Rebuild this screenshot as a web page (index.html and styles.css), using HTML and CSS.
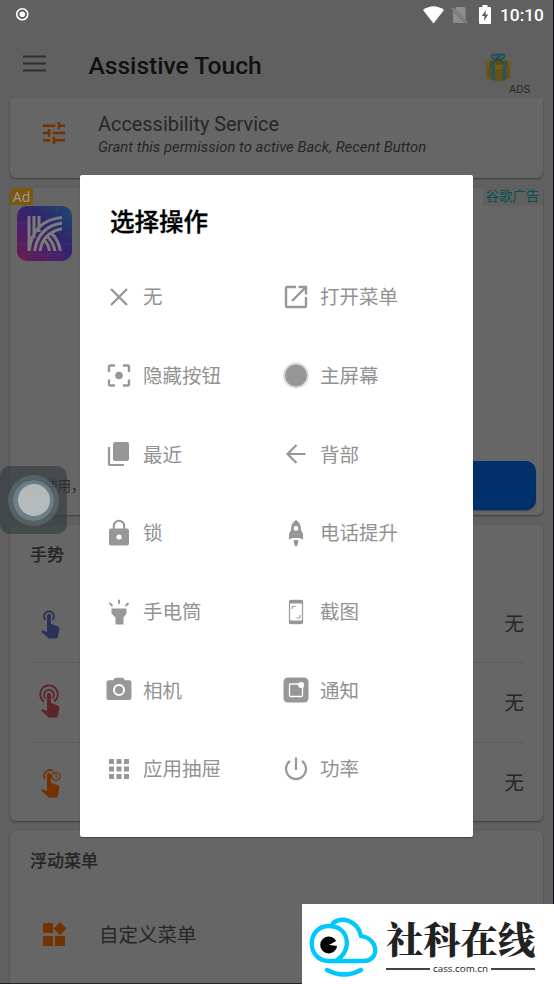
FILE: index.html
```html
<!DOCTYPE html>
<html lang="zh-CN">
<head>
<meta charset="utf-8">
<title>Assistive Touch</title>
<link rel="stylesheet" href="styles.css">
</head>
<body>
<div class="screen">
  <div class="statusbar">
    <svg class="record" viewBox="0 0 12 12"><circle cx="6" cy="6" r="5.3" fill="none" stroke="#fff" stroke-width="1.500"/><circle cx="6" cy="6" r="2.700" fill="#fff"/></svg>
    <div class="status-icons">
      <svg width="21" height="18" viewBox="0 0 21 18"><path d="M0 4Q10.500-3.500 21 4L10.500 17.500Z" fill="#fff"/></svg>
      <svg width="17" height="18" viewBox="0 0 17 18"><path d="M5.500 1H13q1.500 0 1.500 1.500V14L4 3ZM2 5l12 12H3.500Q2 17 2 15.500Z" fill="#8d8d8d"/><path d="M1 2l15 15" stroke="#929292" stroke-width="1.300"/></svg>
      <svg width="12" height="19" viewBox="0 0 12 19"><path d="M3.500 0h5v2H11q1 0 1 1v15q0 1-1 1H1q-1 0-1-1V3q0-1 1-1h2.500Z" fill="#fff"/><path d="M7 5L2.700 11H5.500L5 16 9.300 9.500H6.500Z" fill="#606060"/></svg>
      <span class="clock">10:10</span>
    </div>
  </div>
  <header class="appbar">
    <svg class="burger" viewBox="0 0 23 17"><path d="M0 1.500h23M0 8.500h23M0 15.500h23" stroke="#303030" stroke-width="2"/></svg>
    <h1>Assistive Touch</h1>
    <div class="ads">
      <svg width="27" height="29" viewBox="0 0 27 29"><path d="M1.500 11L13 16l12-5v14.500L13 28.500l-11.500-3Z" fill="#695211"/><path d="M.5 8.500L13 5l13.500 3.500v5L13 17 .5 13.500Z" fill="#725b15"/><path d="M5 7.500l5 1.500v18.500l-3.500-1V15L4 13ZM18 9l4-1.500 1 5.500-2 2v12l-3.500 1Z" fill="#28545e"/><path d="M7 8h13l-2 4H9Z" fill="#634b13"/><path d="M13 7C9 7 5 4 7 2s5 1 6 5c1-4 4-7 6-5s-2 5-6 5ZM13 6C10 2 11 1 13 1s3 1 0 5M12 7l-5 3M14 7l5 3" fill="none" stroke="#204c57" stroke-width="1.700"/></svg>
      <span>ADS</span>
    </div>
  </header>
  <main>
    <section class="card service">
      <svg class="icon-tune" viewBox="3 3 18 18"><path fill="#753100" d="M3 17v2h6v-2H3zM3 5v2h10V5H3zm10 16v-2h8v-2h-8v-2h-2v6h2zM7 9v2H3v2h4v2h2V9H7zm14 4v-2H11v2h10zm-6-4h2V7h4V5h-4V3h-2v6z"/></svg>
      <div><div class="service-title">Accessibility Service</div><div class="service-note">Grant this permission to active Back, Recent Button</div></div>
    </section>
    <section class="card advert">
      <div class="ad-head"><span class="ad-badge">Ad</span><span class="ad-source">谷歌广告</span></div>
      <svg class="ad-logo" viewBox="0 0 55 55">
        <defs><linearGradient id="lg" x1="0" y1="1" x2="1" y2="0"><stop offset="0" stop-color="#6d1c48"/><stop offset=".3" stop-color="#501f67"/><stop offset=".6" stop-color="#30266f"/><stop offset="1" stop-color="#1c4c6c"/></linearGradient><clipPath id="kc"><path d="M10 10h35v35H10z"/></clipPath></defs>
        <rect width="55" height="55" rx="10" fill="url(#lg)"/>
        <path d="M0 17h10M0 38h10M45 7h10M45 38h10M13 0v7M40 0v5M30 48v7M5 48h45" stroke="#60477c" stroke-width=".6" opacity=".5"/>
        <g clip-path="url(#kc)" fill="none" stroke="#7b7b7b" stroke-width="3"><path d="M12 10v35M17 10v22M22 10v16M12 46Q15 14 46 11.500M17.500 46Q21 20 46 17M23 46Q25 26 46 22.500M34 27q8 7 9.500 19M30 30q7 7 8 16M27 34q5 5 5.500 12"/></g>
      </svg>
      <div class="ad-bottom"><span>短期使用，</span><div class="ad-button"></div></div>
    </section>
    <section class="card gestures">
      <h2>手势</h2>
      <div class="gesture"><svg class="tap" viewBox="0 0 28 36"><path d="M8.600 15A5 5 0 1 1 15.400 15" fill="none" stroke="#293059" stroke-width="1.700"/><path d="M10 11q0-2 2-2t2 2v8l7 2.500q1.500.7 1.300 2.500L21 31.500q-.3 2-2.500 2H12L4 26.500l1.500-1.200L10 27Z" fill="#293059"/></svg><span>无</span></div>
      <div class="gesture"><svg class="tap" viewBox="0 0 28 36"><path d="M7 17.500A8.800 8.800 0 1 1 17 17.500M8.600 14.500A5 5 0 1 1 15.400 14.500" fill="none" stroke="#5c2527" stroke-width="1.700"/><path d="M10 11q0-2 2-2t2 2v8l7 2.500q1.500.7 1.300 2.500L21 31.500q-.3 2-2.500 2H12L4 26.500l1.500-1.200L10 27Z" fill="#5c2527"/></svg><span>无</span></div>
      <div class="gesture"><svg class="tap" viewBox="0 0 28 36"><path d="M8 15A5.800 5.800 0 0 1 16 7" fill="none" stroke="#753100" stroke-width="1.700"/><circle cx="19" cy="12.500" r="4" fill="none" stroke="#753100" stroke-width="1.300"/><path d="M19 10v3l2 1" fill="none" stroke="#753100"/><path d="M10 11q0-2 2-2t2 2v8l7 2.500q1.500.7 1.300 2.500L21 31.500q-.3 2-2.500 2H12L4 26.500l1.500-1.200L10 27Z" fill="#753100"/></svg><span>无</span></div>
    </section>
    <section class="card floating">
      <h2>浮动菜单</h2>
      <div class="custom"><svg width="24" height="24" viewBox="0 0 24 24"><path fill="#753100" d="M0 1h10v10H0zM0 14h10v10H0zM12 14h10v10H12zM17 0l6.500 6.500L17 13l-6.500-6.500z"/></svg><span>自定义菜单</span></div>
    </section>
  </main>

  <div class="assist"><div class="assist-ring"><div class="assist-core"></div></div></div>

  <div class="dialog" role="dialog">
    <h3>选择操作</h3>
    <div class="actions">
      <div class="action"><svg viewBox="0 0 26 26"><path d="M5 5l16 16M21 5L5 21" fill="none" stroke="#979797" stroke-width="2.400"/></svg><span>无</span></div>
      <div class="action"><svg viewBox="0 0 26 26"><path d="M13 3H4.500Q3 3 3 4.500v17Q3 23 4.500 23h17q1.500 0 1.500-1.500V13M15.500 3H23v7.500M23 3L9 17" fill="none" stroke="#979797" stroke-width="2.400"/></svg><span>打开菜单</span></div>
      <div class="action"><svg viewBox="0 0 26 26"><circle cx="13" cy="12.500" r="3.800" fill="#979797"/><path d="M3 9V4Q3 2.500 4.500 2.500H9M17 2.500h4.500Q23 2.500 23 4V9M23 16.500V21q0 1.500-1.500 1.500H17M9 22.500H4.500Q3 22.500 3 21v-4.500" fill="none" stroke="#979797" stroke-width="2.400"/></svg><span>隐藏按钮</span></div>
      <div class="action"><svg viewBox="0 0 26 26"><circle cx="13" cy="12.500" r="12.300" fill="#e6e6e6" stroke="#d8d8d8" stroke-width="1.200"/><circle cx="13" cy="12.500" r="11" fill="#979797"/></svg><span>主屏幕</span></div>
      <div class="action"><svg viewBox="0 0 26 26"><rect x="7" y="1" width="16" height="19" rx="2" fill="#979797"/><path d="M3 6v16.500Q3 24 4.500 24H18" fill="none" stroke="#979797" stroke-width="2.200"/></svg><span>最近</span></div>
      <div class="action"><svg viewBox="0 0 26 26"><path d="M22.500 13H5M13.500 4L4.500 13l9 9" fill="none" stroke="#979797" stroke-width="2.200"/></svg><span>背部</span></div>
      <div class="action"><svg viewBox="0 0 26 26"><path d="M7.800 10V6a5.200 5.200 0 0 1 10.400 0v4" fill="none" stroke="#979797" stroke-width="2.100"/><rect x="3" y="8.500" width="20" height="17" rx="2" fill="#979797"/><circle cx="13" cy="17" r="2.600" fill="#fff"/></svg><span>锁</span></div>
      <div class="action"><svg viewBox="0 0 26 26"><path fill="#979797" fill-rule="evenodd" d="M13 0c3.500 2.200 5.300 5.500 5 10l2 3.500v6l-3.500-1.500h-7L6 19.500v-6L8 10C7.700 5.500 9.500 2.200 13 0Zm0 6a2.400 2.400 0 1 0 0 4.800A2.400 2.400 0 0 0 13 6Z"/><path d="M10.500 20.500l2.500-.8 2.500.8L14.500 25 13 27l-1.500-2Z" fill="#979797"/></svg><span>电话提升</span></div>
      <div class="action"><svg viewBox="0 0 26 26"><path d="M5.500 9.500h15v5l-3 4V25.500h-8v-7l-4-4Z" fill="#979797"/><path d="M13 .7v4M3.500 4L6.500 7M22.500 4l-3 3" stroke="#979797" stroke-width="2"/></svg><span>手电筒</span></div>
      <div class="action"><svg viewBox="0 0 26 26"><rect x="6.500" y="1.500" width="13" height="23" rx="1.500" fill="#fff" stroke="#a2a2a2" stroke-width="1.300"/><path d="M6 4.500V2.500q0-1.500 1.500-1.500h11Q20 1 20 2.500v2ZM6 21.500v2Q6 25 7.500 25h11q1.500 0 1.500-1.500v-2Z" fill="#979797"/><path d="M9 10V7.500h3.500M17 16v3h-3.500" fill="none" stroke="#979797"/></svg><span>截图</span></div>
      <div class="action"><svg viewBox="0 0 26 26"><path fill="#979797" fill-rule="evenodd" d="M9 .8h8l2 2.400h4.300Q25.500 3.200 25.500 5.500v15q0 2.500-2.500 2.500H3Q.5 23 .5 20.500v-15Q.5 3.200 3 3.200h4ZM13 7a6 6 0 1 0 0 12A6 6 0 0 0 13 7Z"/><circle cx="13" cy="13" r="4" fill="#979797"/></svg><span>相机</span></div>
      <div class="action"><svg viewBox="0 0 26 26"><rect x=".5" y=".5" width="25" height="25" rx="4.500" fill="#979797"/><rect x="6.500" y="7" width="13" height="12.500" rx="1" fill="none" stroke="#fff" stroke-width="1.300"/><circle cx="18.200" cy="8" r="3" fill="#fff"/></svg><span>通知</span></div>
      <div class="action"><svg viewBox="0 0 26 26"><path d="M3 3h5v5H3zM10.500 3h5v5h-5zM18 3h5v5h-5zM3 10.500h5v5H3zM10.500 10.500h5v5h-5zM18 10.500h5v5h-5zM3 18h5v5H3zM10.500 18h5v5h-5zM18 18h5v5h-5z" fill="#979797"/></svg><span>应用抽屉</span></div>
      <div class="action"><svg viewBox="0 0 26 26"><path d="M13 1.500v12.500M7 5a10 10 0 1 0 12 0" fill="none" stroke="#979797" stroke-width="2.200"/></svg><span>功率</span></div>
    </div>
  </div>

</div>
<div class="brand">
  <svg width="70" height="60" viewBox="0 0 70 60"><g fill="none" stroke="#00c8ff" stroke-width="4.300" stroke-linecap="round"><path d="M24 5C32-1 48 1 52 18C71 21 70 43 55 43H20C-3 43-3 8 20 8C41 8 43 33 28.500 41.500"/><path d="M18 52q17 9 34 0"/></g><circle cx="19.700" cy="27" r="8.500" fill="#000"/><path d="M20 27l9-5v6Z" fill="#fff"/></svg>
  <div class="brand-text"><div class="brand-name">社科在线</div><div class="brand-site"><i></i><span>cass.com.cn</span><i></i></div></div>
</div>
</body>
</html>
```
FILE: styles.css
```css
* { box-sizing: border-box; margin: 0; padding: 0; }
body { position: relative; width: 554px; height: 984px; overflow: hidden; background: #606060; color: #262626; font-family: Roboto, "Noto Sans CJK SC", sans-serif; }
svg { display: block; flex: none; overflow: visible; }
.screen { position: relative; height: 984px; overflow: hidden; border-right: 1px solid #0c0c20; border-bottom: 1px solid #252030; }
.statusbar { height: 31px; padding: 0 11px 0 16px; display: flex; align-items: center; justify-content: space-between; }
.record { width: 12.5px; height: 12.5px; margin-top: -2px; }
.status-icons { display: flex; align-items: center; margin-top: -2px; }
.status-icons svg:nth-child(2) { margin-left: 7px; }
.status-icons svg:nth-child(3) { margin-left: 11px; }
.clock { margin-left: 9px; color: #fff; font-size: 17.3px; font-weight: 500; line-height: 30px; width: 42px; white-space: nowrap; }
.appbar { height: 67px; display: flex; padding: 0 20px 0 23px; align-items: center; }
.burger { width: 23px; height: 17px; margin-top: -2px; }
h1 { margin: 2px 0 0 42.5px; font-size: 24.6px; font-weight: 500; line-height: 34px; color: #101010; white-space: nowrap; }
.ads { margin: 21px 3px 0 auto; width: 45px; display: flex; flex-direction: column; }
.ads span { align-self: flex-end; font-size: 11px; line-height: 16px; }
.card { margin: 0 10px; background: #666; border-radius: 6px; box-shadow: 0 1px 2px rgba(0,0,0,.38); }
.service { height: 80px; display: flex; padding: 13px 0 0 33px; border-radius: 0 0 6px 6px; clip-path: inset(0 -4px -4px); }
.icon-tune { width: 22px; height: 22px; margin: 11px 33px 0 0; }
.service-title { font-size: 19.9px; line-height: 27px; white-space: nowrap; }
.service-note { font-size: 14.9px; font-style: italic; line-height: 19px; white-space: nowrap; }
.advert { height: 327px; margin-top: 10px; display: flex; flex-direction: column; overflow: hidden; }
.ad-head { display: flex; justify-content: space-between; height: 18px; }
.ad-badge { width: 23px; height: 17px; background: #7b580d; color: #999; font: 14px/17px "Noto Sans", sans-serif; text-align: center; }
.ad-source { padding: 0 4px 0 3px; background: #606060; color: #074d57; font-size: 13.3px; line-height: 17px; white-space: nowrap; }
.ad-logo { width: 55px; height: 55px; margin-left: 7px; }
.ad-bottom { margin-top: auto; height: 54px; padding: 0 7px; display: flex; justify-content: space-between; font-size: 13.5px; line-height: 51px; }
.ad-button { width: 200px; height: 49px; border-radius: 10px; background: #00306a; box-shadow: 0 1px 1px #404a55; }
.gestures { height: 296px; margin-top: 10px; padding: 16px 19px 0 20px; }
h2 { font-size: 17px; font-weight: 500; line-height: 28px; -webkit-text-stroke: .2px #262626; }
.gestures h2 { margin-bottom: 15px; }
.gesture { height: 79.3px; display: flex; justify-content: space-between; align-items: center; border-bottom: 1px solid #5b5b5b; font-size: 19.5px; }
.gesture:last-child { border: 0; }
.gesture span { margin-top: -1px; }
.tap { width: 28px; height: 36px; margin-left: 7px; }
.floating { height: 160px; margin-top: 10px; padding: 16px 20px 0; }
.custom { display: flex; align-items: center; margin-top: 16px; padding-left: 13px; height: 86px; font-size: 19.5px; }
.custom span { margin: -2px 0 0 32px; }
.assist { position: absolute; left: 0; top: 466px; width: 67px; height: 68px; border-radius: 10px; background: rgba(48,57,60,.62); display: flex; align-items: center; justify-content: center; }
.assist-ring { width: 51px; height: 51px; border-radius: 50%; border: 5px solid rgba(96,110,118,.65); background: rgba(122,145,156,.75); background-clip: padding-box; display: flex; align-items: center; justify-content: center; }
.assist-core { width: 32px; height: 32px; border-radius: 50%; background: rgba(201,203,200,.78); }
.dialog { position: absolute; left: 80px; top: 175px; width: 393px; height: 662px; background: #fff; border-radius: 2px; box-shadow: 0 1px 1px rgba(0,0,0,.35); padding: 30px 26px 0; }
h3 { margin-left: 4px; font-size: 24.5px; line-height: 36px; font-weight: 500; color: #000; -webkit-text-stroke: .35px #000; }
.actions { margin-top: 16.5px; display: grid; grid-template-columns: 177px 1fr; grid-auto-rows: 78.7px; }
.action { display: flex; align-items: center; gap: 11px; color: #929292; font-size: 19.5px; white-space: nowrap; }
.action span { margin-top: -2px; }
.action svg { width: 26px; height: 26px; }
.brand { position: absolute; left: 302px; top: 904px; width: 252px; height: 80px; background: #fff; display: flex; padding: 14px 0 0 7px; }
.brand-text { width: 149px; margin: -1px 0 0 7px; }
.brand-name { color: #222; font: 900 37.3px/43px "Noto Serif CJK SC", "Noto Sans CJK SC", serif; height: 43px; white-space: nowrap; }
.brand-site { display: flex; align-items: center; justify-content: space-between; height: 16px; margin-top: 1px; font: 9.8px/14px "Open Sans", sans-serif; color: #222; }
.brand-site i { width: 44px; height: 2px; background: #444; }
```
